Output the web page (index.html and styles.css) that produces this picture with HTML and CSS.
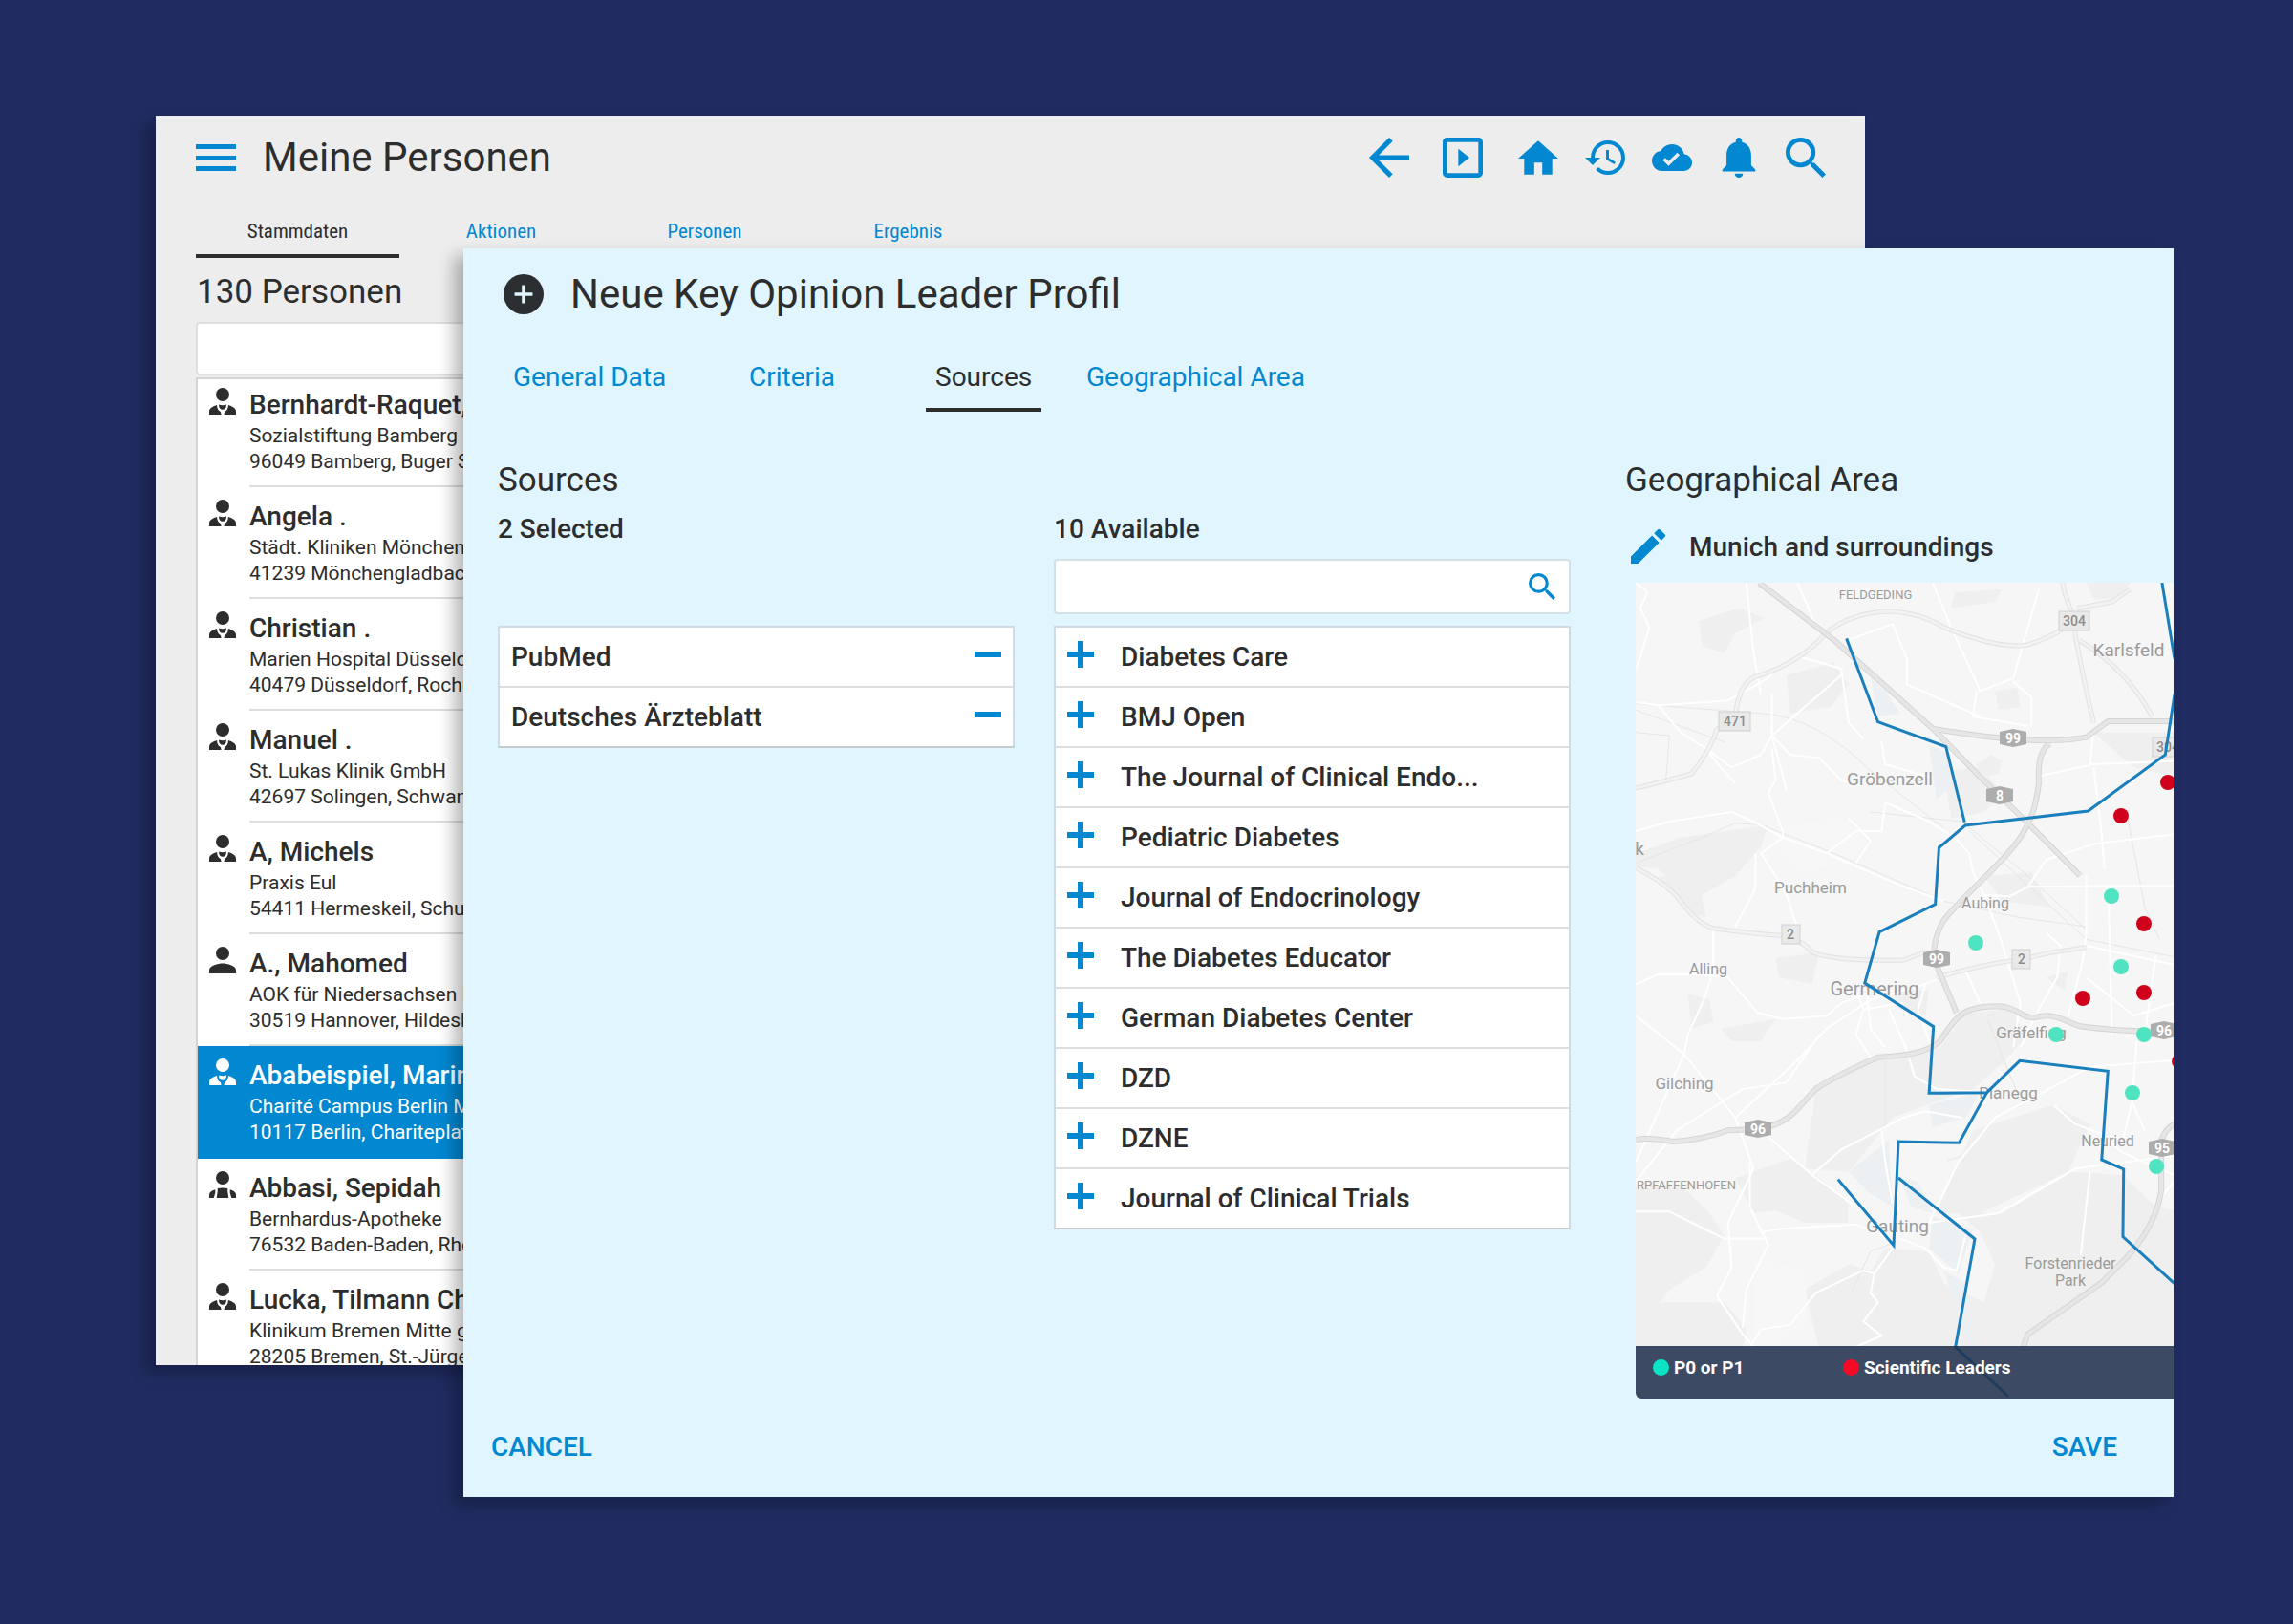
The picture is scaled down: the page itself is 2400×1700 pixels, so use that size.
FILE: index.html
```html
<!DOCTYPE html>
<html lang="de">
<head>
<meta charset="utf-8">
<meta name="viewport" content="width=device-width, initial-scale=1">
<title>Neue Key Opinion Leader Profil</title>
<link rel="stylesheet" href="styles.css">
</head>
<body>
<svg class="defs" width="0" height="0" aria-hidden="true">
  <symbol id="i-doctor" viewBox="0 0 16 16"><circle cx="8" cy="4" r="4"/><path d="M4.600 10.300C2.400 10.900 0 12.100 0 14v2h7.200l-.4-1.700C5.400 13.700 4.700 12.300 4.600 10.300zM11.400 10.300C13.600 10.900 16 12.100 16 14v2H8.800l.4-1.700C10.600 13.700 11.300 12.300 11.400 10.300zM5.700 10Q8 10.800 10.300 10Q10.200 13 8 13T5.700 10z"/></symbol>
  <symbol id="i-person" viewBox="0 0 16 16"><circle cx="8" cy="4" r="4"/><path d="M8 10c-2.670 0-8 1.340-8 4v2h16v-2c0-2.660-5.330-4-8-4z"/></symbol>
  <symbol id="i-pharmacist" viewBox="0 0 16 16"><circle cx="8" cy="4" r="4"/><path d="M5 10.300Q8 9.700 11 10.300V12L11.600 16H4.400L5 12zM3.600 11Q0 12.200 0 14v2h2.700l.9-3zM12.400 11Q16 12.200 16 14v2h-2.700l-.9-3z"/></symbol>
  <symbol id="i-plus" viewBox="0 0 14 14"><path d="M8.500 0h-3v5.500H0v3h5.500V14h3V8.500H14v-3H8.500z"/></symbol>
  <symbol id="i-minus" viewBox="0 0 14 14"><path d="M0 5.500h14v3H0z"/></symbol>
  <symbol id="i-search" viewBox="3 3 17.490 17.490"><path d="M15.500 14h-.79l-.28-.27A6.471 6.471 0 0 0 16 9.500 6.500 6.500 0 1 0 9.500 16c1.610 0 3.090-.59 4.230-1.570l.27.28v.79l5 4.990L20.490 19l-4.990-5zm-6 0C7.010 14 5 11.990 5 9.500S7.010 5 9.500 5 14 7.010 14 9.500 11.990 14 9.500 14z"/></symbol>
</svg>
<div class="desktop">
  <section class="window persons" aria-label="Meine Personen">
    <header class="persons-head">
      <button class="icon-btn" aria-label="Menü"><svg width="42" height="28" viewBox="0 0 42 28"><path d="M0 0h42v5H0zM0 12h42v5H0zM0 23h42v5H0z"/></svg></button>
      <h1 class="title">Meine Personen</h1>
      <nav class="toolbar" aria-label="Werkzeuge">
        <button class="icon-btn back" aria-label="Zurück"><svg width="42" height="42" viewBox="4 4 16 16"><path d="M20 11H7.830l5.590-5.590L12 4l-8 8 8 8 1.410-1.410L7.830 13H20v-2z"/></svg></button>
        <button class="icon-btn present" aria-label="Präsentation"><svg width="42" height="42" viewBox="3 3 18 18"><path d="M10 8v8l5-4-5-4zm9-5H5c-1.100 0-2 .9-2 2v14c0 1.100.9 2 2 2h14c1.100 0 2-.9 2-2V5c0-1.100-.9-2-2-2zm0 16H5V5h14v14z"/></svg></button>
        <button class="icon-btn" aria-label="Start"><svg width="42" height="36" viewBox="2 3 20 17"><path d="M10 20v-6h4v6h5v-8h3L12 3 2 12h3v8z"/></svg></button>
        <button class="icon-btn" aria-label="Verlauf"><svg width="42" height="36" viewBox="1 3 21 18"><path d="M13 3a9 9 0 0 0-9 9H1l3.890 3.890.07.14L9 12H6c0-3.870 3.130-7 7-7s7 3.130 7 7-3.130 7-7 7c-1.930 0-3.680-.79-4.940-2.060l-1.420 1.420A8.954 8.954 0 0 0 13 21a9 9 0 0 0 0-18zm-1 5v5l4.280 2.540.72-1.210-3.500-2.080V8H12z"/></svg></button>
        <button class="icon-btn" aria-label="Synchronisiert"><svg width="42" height="28" viewBox="0 4 24 16"><path d="M19.350 10.040C18.670 6.590 15.640 4 12 4 9.110 4 6.600 5.640 5.350 8.040 2.340 8.360 0 10.910 0 14c0 3.310 2.690 6 6 6h13c2.760 0 5-2.240 5-5 0-2.640-2.050-4.780-4.650-4.960zM10 17l-3.500-3.500 1.410-1.410L10 14.170 15.180 9l1.410 1.410L10 17z"/></svg></button>
        <button class="icon-btn" aria-label="Mitteilungen"><svg width="42" height="42" viewBox="2.250 2.500 19.500 19.500"><path d="M12 22c1.100 0 2-.9 2-2h-4c0 1.100.89 2 2 2zm6-6v-5c0-3.070-1.640-5.640-4.500-6.320V4c0-.83-.67-1.500-1.500-1.500s-1.500.67-1.500 1.500v.68C7.630 5.360 6 7.920 6 11v5l-2 2v1h16v-1l-2-2z"/></svg></button>
        <button class="icon-btn" aria-label="Suchen"><svg width="42" height="42"><use href="#i-search"/></svg></button>
      </nav>
    </header>
    <nav class="persons-tabs" aria-label="Bereiche">
      <a class="ptab current" href="#stammdaten">Stammdaten</a>
      <a class="ptab" href="#aktionen">Aktionen</a>
      <a class="ptab" href="#personen">Personen</a>
      <a class="ptab" href="#ergebnis">Ergebnis</a>
    </nav>
    <h2 class="heading count">130 Personen</h2>
    <input class="persons-search" type="search" aria-label="Personen suchen">
    <ul class="persons-list">
      <li class="person"><svg class="avatar"><use href="#i-doctor"/></svg><div class="info"><h3>Bernhardt-Raquet, </h3><p>Sozialstiftung Bamberg</p><p>96049 Bamberg, Buger S</p></div></li>
      <li class="person"><svg class="avatar"><use href="#i-doctor"/></svg><div class="info"><h3>Angela .</h3><p>Städt. Kliniken Mönchen</p><p>41239 Mönchengladbac</p></div></li>
      <li class="person"><svg class="avatar"><use href="#i-doctor"/></svg><div class="info"><h3>Christian .</h3><p>Marien Hospital Düsseld</p><p>40479 Düsseldorf, Rochu</p></div></li>
      <li class="person"><svg class="avatar"><use href="#i-doctor"/></svg><div class="info"><h3>Manuel .</h3><p>St. Lukas Klinik GmbH</p><p>42697 Solingen, Schwan</p></div></li>
      <li class="person"><svg class="avatar"><use href="#i-doctor"/></svg><div class="info"><h3>A, Michels</h3><p>Praxis Eul</p><p>54411 Hermeskeil, Schu</p></div></li>
      <li class="person"><svg class="avatar"><use href="#i-person"/></svg><div class="info"><h3>A., Mahomed</h3><p>AOK für Niedersachsen H</p><p>30519 Hannover, Hildesh</p></div></li>
      <li class="person selected"><svg class="avatar"><use href="#i-doctor"/></svg><div class="info"><h3>Ababeispiel, Marin</h3><p>Charité Campus Berlin M</p><p>10117 Berlin, Chariteplat</p></div></li>
      <li class="person"><svg class="avatar"><use href="#i-pharmacist"/></svg><div class="info"><h3>Abbasi, Sepidah</h3><p>Bernhardus-Apotheke</p><p>76532 Baden-Baden, Rhe</p></div></li>
      <li class="person"><svg class="avatar"><use href="#i-doctor"/></svg><div class="info"><h3>Lucka, Tilmann Ch</h3><p>Klinikum Bremen Mitte g</p><p>28205 Bremen, St.-Jürge</p></div></li>
    </ul>
  </section>

  <main class="window profile">
    <header class="profile-head">
      <svg width="42" height="42" viewBox="2 2 20 20" aria-hidden="true"><circle cx="12" cy="12" r="10" fill="#2b2f31"/><path d="M12 7.500v9M7.500 12h9" stroke="#e1f5fe" stroke-width="1.700"/></svg>
      <h1 class="title">Neue Key Opinion Leader Profil</h1>
    </header>
    <nav class="profile-tabs" aria-label="Profil">
      <a class="tab" href="#general">General Data</a>
      <a class="tab" href="#criteria">Criteria</a>
      <a class="tab current" href="#sources">Sources</a>
      <a class="tab" href="#area">Geographical Area</a>
    </nav>
    <div class="columns">
      <section class="col">
        <h2 class="heading">Sources</h2>
        <h3 class="sub">2 Selected</h3>
        <ul class="sources chosen">
          <li><span>PubMed</span><button class="icon-btn" aria-label="Remove PubMed"><svg class="sign"><use href="#i-minus"/></svg></button></li>
          <li><span>Deutsches Ärzteblatt</span><button class="icon-btn" aria-label="Remove Deutsches Ärzteblatt"><svg class="sign"><use href="#i-minus"/></svg></button></li>
        </ul>
      </section>
      <section class="col available-col">
        <h3 class="sub">10 Available</h3>
        <label class="search"><input type="search" aria-label="Search sources"><svg class="sign"><use href="#i-search"/></svg></label>
        <ul class="sources available">
          <li><button class="icon-btn" aria-label="Add Diabetes Care"><svg class="sign"><use href="#i-plus"/></svg></button><span>Diabetes Care</span></li>
          <li><button class="icon-btn" aria-label="Add BMJ Open"><svg class="sign"><use href="#i-plus"/></svg></button><span>BMJ Open</span></li>
          <li><button class="icon-btn" aria-label="Add The Journal of Clinical Endo..."><svg class="sign"><use href="#i-plus"/></svg></button><span>The Journal of Clinical Endo...</span></li>
          <li><button class="icon-btn" aria-label="Add Pediatric Diabetes"><svg class="sign"><use href="#i-plus"/></svg></button><span>Pediatric Diabetes</span></li>
          <li><button class="icon-btn" aria-label="Add Journal of Endocrinology"><svg class="sign"><use href="#i-plus"/></svg></button><span>Journal of Endocrinology</span></li>
          <li><button class="icon-btn" aria-label="Add The Diabetes Educator"><svg class="sign"><use href="#i-plus"/></svg></button><span>The Diabetes Educator</span></li>
          <li><button class="icon-btn" aria-label="Add German Diabetes Center"><svg class="sign"><use href="#i-plus"/></svg></button><span>German Diabetes Center</span></li>
          <li><button class="icon-btn" aria-label="Add DZD"><svg class="sign"><use href="#i-plus"/></svg></button><span>DZD</span></li>
          <li><button class="icon-btn" aria-label="Add DZNE"><svg class="sign"><use href="#i-plus"/></svg></button><span>DZNE</span></li>
          <li><button class="icon-btn" aria-label="Add Journal of Clinical Trials"><svg class="sign"><use href="#i-plus"/></svg></button><span>Journal of Clinical Trials</span></li>
        </ul>
      </section>
      <section class="col area-col">
        <h2 class="heading">Geographical Area</h2>
        <div class="area-name">
          <button class="icon-btn" aria-label="Edit area"><svg width="36" height="36" viewBox="3 3 18 18"><path d="M3 17.250V21h3.750L17.810 9.940l-3.750-3.750L3 17.250zM20.710 7.040a1 1 0 0 0 0-1.410l-2.340-2.340a1 1 0 0 0-1.410 0l-1.830 1.830 3.750 3.750 1.830-1.830z"/></svg></button>
          <span>Munich and surroundings</span>
        </div>
        <div class="map">
          <svg class="map-art" viewBox="0 0 563 854" role="img" aria-label="Map of Munich and surroundings">
            <rect width="563" height="854" fill="#f6f6f6"/>
            <g class="terrain" transform="translate(-22 240) scale(.3827 .3333)">
              <path class="wood" d="M58 130L180 80 300 60 420 40 400 110 330 200 240 260 180 240 120 180 58 170zM120 200L230 215 250 330 200 320zM230 -600L340 -640 410 -610 330 -560 300 -500 240 -520zM470 -430L600 -470 640 -400 590 -330 480 -310zM200 570L260 590 270 660 210 680zM290 680L440 650 400 720 320 720zM440 460L560 440 540 540 450 520zM330 1150L480 1090 550 1140 640 1230 640 1290 520 1290 440 1250 380 1260zM58 1180L180 1170 260 1260 300 1330 250 1430 150 1500 58 1640z"/>
              <path class="wood" d="M550 870L720 780 890 740 960 630 1080 620 1130 700 1060 790 980 870 900 900 760 960 640 1130 520 1120zM980 1000L1200 920 1300 980 1240 1130 1000 1260 880 1260zM940 1260L1060 1260 1250 1130 1390 1140 1480 1240 1530 1250V1690H560L520 1500 640 1420 700 1440 740 1370 860 1380 900 1480 1010 1540 1040 1420 1000 1320zM120 1540L300 1540 360 1620 350 1690H58V1600z"/>
              <path class="wood" d="M1310 -250L1530 -250V-110L1420 -140zM900 -130L1000 -140 1060 -60 1010 0 920 20zM930 -690L1060 -700 1040 -660 920 -640zM1290 -720H1410L1380 -670 1310 -670zM1010 200L1140 190 1190 300 1060 280zM1040 -380L1100 -390 1110 -330 1050 -320zM760 560L860 560 850 640 780 620zM1180 520L1240 500 1230 560zM990 -150l40 -30 30 20 -10 40 -40 10z"/>
              <path class="open" d="M420 40L640 20 700 90 640 160 500 190 440 120zM640 640L800 620 830 720 720 760 640 740zM380 1400L520 1440 530 1600 440 1690 380 1690z"/>
              <path class="field" d="M700 -420L740 -380 780 -310 720 -300zM860 -210L920 -180 920 -80 880 -40zM640 1130L750 1030 760 1240 700 1200zM860 920L1000 880 960 960 870 990zM870 1270L980 1310 940 1450 860 1370zM780 1150L830 1160 870 1260 810 1240zM900 1440L960 1480 990 1690 960 1640z"/>
              <path class="thin" d="M58 -340L400 -310Q550 -300 700 -130L900 50M58 -320L300 -220M58 160L240 80 330 35 400 40 600 130 900 280 1100 330 1290 360M700 0L950 30 1130 200 1290 370M970 60L1290 400 1530 455M1400 0L1450 300 1490 400M740 780V980L730 1000M650 1500L700 1380 770 1350M1020 650L1100 880M910 1095L950 1080M58 -250L150 -240 140 -100"/>
              <path class="white" d="M58 -345L120 -335 310 -350 390 -400 430 -430M120 -335L180 -250 250 -200 320 -140 400 -180 430 -240 430 -370M250 -200Q280 -150 330 -90M360 -720L380 -500 400 -370M430 -240L520 -330 620 -430M430 -240L480 -180 560 -170 620 -100 680 -80M500 -490L620 -450 640 -280 680 -230M640 -540L760 -590 800 -480 800 -400M800 -400L1000 -300M870 -720L920 -580 1000 -380 1090 -420 1160 -700M1090 -410L1140 -360 1140 -270M990 -380L980 -300 1130 -270M58 -720L90 -690 70 -640 95 -580 60 -450"/>
              <path class="white" d="M430 -200L440 -100 420 -60 460 60 460 80M58 60L150 30 320 0 380 30 460 80 580 130 780 230 900 280M460 80L400 130 440 200 470 260 510 400M385 130V240L330 360M270 370V500L240 600 200 700 190 760M58 540L120 510 230 510 310 520 390 630 460 650 580 640M58 640L190 760 260 860 330 960M58 1100L190 760M330 960L500 780 580 680 700 590 850 540 920 510M560 700L470 850 350 870 170 1000 58 1160M330 960L380 1120 310 1290 320 1430 280 1520 350 1640 380 1680M420 1020L540 1140 660 1240"/>
              <path class="white" d="M540 1140L620 1060 790 960 850 940 950 960M580 640L620 600 690 570 760 560M660 560L680 620 790 600M690 570L700 680 740 740M750 620L800 750 820 830 880 870 1000 880M680 620L660 700 700 770M58 1255H150L300 1340H415M415 1340L400 1320 450 1310 660 1295 760 1340M370 1100L370 1240 420 1360 360 1500 350 1620M370 1680L400 1625 480 1610 550 1510 680 1440 710 1450 760 1370M710 1450L700 1510 720 1540 680 1600 730 1645 660 1680"/>
              <path class="white" d="M860 1290L940 1100 1040 960 1140 900 1220 850 1300 800 1530 780M860 1290L1050 1260 1260 1120 1530 1080M780 1340L850 1370 900 1430 935 1440 960 1330M1200 920L1260 980 1330 1010 1390 1070 1530 1140M1300 1130L1275 1390M730 1000L740 1100 760 1230M1390 1030L1415 910 1450 1000M1415 910L1430 690M1480 1230L1530 1160"/>
              <path class="white" d="M930 80L970 130 980 190 1010 260 1050 380 1110 600 1090 740M1010 260L1080 265 1130 235 1530 230M1130 235L1180 150 1310 100 1530 70M1290 200V380L1280 470 1240 640M1290 520L1420 640 1530 600M1290 420L1530 480M1310 -140L1330 50 1340 180M1180 380L1220 420 1210 520 1150 640 1110 740M960 500L1000 600M1350 230L1360 700M1480 450L1450 700M740 -30L860 30 930 80M1310 -260L1300 -150 1530 -160M1150 -110L1310 -150M580 130L660 60 730 60 740 -30M660 160L700 90 640 20M850 540L830 620 860 720M430 -240L470 -70M500 -720L560 -560M730 -220L740 -150 860 -110"/>
              <path class="road-edge" d="M58 175Q150 230 180 280 230 355 270 365 400 385 460 388 510 400 540 440 600 470 790 465L850 440M880 520Q1000 480 1110 463L1200 440 1290 425M58 -75Q150 -100 210 -120 260 -190 280 -260L330 -300Q340 -420 400 -430 500 -470 560 -540 620 -620 740 -630 830 -630 900 -580 1050 -510 1130 -525 1200 -550 1260 -600 1230 -680 1225 -720M1265 -640L1360 -660 1410 -700M1255 -590Q1270 -480 1310 -280M1270 -540Q1400 -450 1470 -300"/>
              <path class="road" d="M58 175Q150 230 180 280 230 355 270 365 400 385 460 388 510 400 540 440 600 470 790 465L850 440M880 520Q1000 480 1110 463L1200 440 1290 425M58 -75Q150 -100 210 -120 260 -190 280 -260L330 -300Q340 -420 400 -430 500 -470 560 -540 620 -620 740 -630 830 -630 900 -580 1050 -510 1130 -525 1200 -550 1260 -600 1230 -680 1225 -720M1265 -640L1360 -660 1410 -700M1255 -590Q1270 -480 1310 -280M1270 -540Q1400 -450 1470 -300"/>
              <path class="motorway-edge" d="M395 -720L600 -540 870 -262 1000 -110 1130 35 1273 200M870 -262Q1160 -205 1290 -235L1350 -285H1530M1190 -215Q1155 -190 1160 -90 1150 0 1130 35C1100 130 960 250 900 340 870 400 870 450 880 480L935 630M58 1030Q90 1020 160 1035 240 1030 310 1000L400 995Q460 980 490 945L550 870Q600 830 720 770 850 765 890 720C940 630 960 610 1050 610 1110 615 1110 650 1150 645 1200 630 1220 650 1270 672Q1380 690 1530 690M1530 980Q1490 1010 1495 1060V1190Q1480 1300 1400 1400L1330 1480 1130 1640 1115 1690"/>
              <path class="motorway" d="M395 -720L600 -540 870 -262 1000 -110 1130 35 1273 200M870 -262Q1160 -205 1290 -235L1350 -285H1530M1190 -215Q1155 -190 1160 -90 1150 0 1130 35C1100 130 960 250 900 340 870 400 870 450 880 480L935 630M58 1030Q90 1020 160 1035 240 1030 310 1000L400 995Q460 980 490 945L550 870Q600 830 720 770 850 765 890 720C940 630 960 610 1050 610 1110 615 1110 650 1150 645 1200 630 1220 650 1270 672Q1380 690 1530 690M1530 980Q1490 1010 1495 1060V1190Q1480 1300 1400 1400L1330 1480 1130 1640 1115 1690"/>
            </g>
            <g class="shield">
              <rect x="443" y="30" width="32" height="20"/><rect x="87" y="135" width="33" height="20"/><rect x="541" y="162" width="32" height="20"/><rect x="153" y="358" width="19" height="20"/><rect x="394" y="384" width="19" height="20"/>
            </g>
            <g class="shield-text">
              <text x="459" y="45">304</text><text x="104" y="150">471</text><text x="557" y="177">304</text><text x="162" y="373">2</text><text x="404" y="399">2</text>
            </g>
            <g class="badge">
              <path d="M381 156l14-3 14 3v13l-14 3-14-3z"/><path d="M367 216l14-3 14 3v13l-14 3-14-3z"/><path d="M301 387l14-3 14 3v13l-14 3-14-3z"/><path d="M539 462l14-3 14 3v13l-14 3-14-3z"/><path d="M114 565l14-3 14 3v13l-14 3-14-3z"/><path d="M537 585l14-3 14 3v13l-14 3-14-3z"/>
            </g>
            <g class="badge-text">
              <text x="395" y="168">99</text><text x="381" y="228">8</text><text x="315" y="399">99</text><text x="553" y="474">96</text><text x="128" y="577">96</text><text x="551" y="597">95</text>
            </g>
            <g class="places">
              <text class="xs" x="251" y="17">FELDGEDING</text>
              <text class="lg" x="516" y="77">Karlsfeld</text>
              <text class="lg" x="266" y="212">Gröbenzell</text>
              <text class="lg" x="4" y="285">k</text>
              <text class="md" x="183" y="325">Puchheim</text>
              <text class="sm" x="366" y="341">Aubing</text>
              <text class="sm" x="76" y="410">Alling</text>
              <text class="xl" x="250" y="432">Germering</text>
              <text class="md" x="414" y="477">Gräfelfing</text>
              <text class="md" x="51" y="530">Gilching</text>
              <text class="md" x="390" y="540">Planegg</text>
              <text class="sm" x="494" y="590">Neuried</text>
              <text class="xs" x="53" y="635">RPFAFFENHOFEN</text>
              <text class="lg" x="274" y="680">Gauting</text>
              <text class="sm" x="455" y="718">Forstenrieder</text>
              <text class="sm" x="455" y="736">Park</text>
            </g>
            <g class="boundary" transform="translate(-22 240) scale(.3827 .3333)">
              <path d="M634 -545L720 -283 906 -205 957 32"/>
              <path d="M1497 -720L1530 -490 1542 -430 1530 -360 1506 -180 1295 -3 959 42 887 112 877 290 724 377 684 537 872 674 860 883 1018 881 1108 781 1349 814 1332 1092 1392 1122 1390 1334 1540 1490"/>
              <path d="M1018 881L942 1039 776 1035 763 1361 611 1154"/>
              <path d="M776 1149L985 1341 932 1680 1076 1835"/>
            </g>
            <g fill="#d0021b"><circle cx="508" cy="244" r="8"/><circle cx="557" cy="209" r="8"/><circle cx="532" cy="357" r="8"/><circle cx="468" cy="435" r="8"/><circle cx="532" cy="429" r="8"/><circle cx="569" cy="501" r="8"/></g>
            <g fill="#50e3c2"><circle cx="498" cy="328" r="8"/><circle cx="356" cy="377" r="8"/><circle cx="508" cy="402" r="8"/><circle cx="440" cy="473" r="8"/><circle cx="532" cy="473" r="8"/><circle cx="520" cy="534" r="8"/><circle cx="545" cy="611" r="8"/></g>
          </svg>
          <div class="legend">
            <span class="key"><i class="dot teal"></i>P0 or P1</span>
            <span class="key"><i class="dot red"></i>Scientific Leaders</span>
          </div>
        </div>
      </section>
    </div>
    <footer class="actions">
      <button class="text-btn" type="button">CANCEL</button>
      <button class="text-btn" type="button">SAVE</button>
    </footer>
  </main>
</div>
</body>
</html>
```
FILE: styles.css
```css
:root {
  --navy: #202c61;
  --blue: #0288d1;
  --ink: #2d2d2d;
  --line: #dedede;
  --panel: #e1f5fe;
}

* { box-sizing: border-box; }

body {
  margin: 0;
  background: var(--navy);
  color: var(--ink);
  font-family: Roboto, "Liberation Sans", sans-serif;
}

h1, h2, h3, p, ul { margin: 0; padding: 0; }
ul { list-style: none; }
svg { display: block; }
a { color: var(--blue); text-decoration: none; }
button, input { font: inherit; }
.defs { position: absolute; }

/* Two overlapping windows share the middle tracks of the grid */
.desktop {
  display: grid;
  grid-template-columns: 163px 322px minmax(0, 1fr) 323px 125px;
  grid-template-rows: 121px 139px 1fr 138px 133px;
  min-height: 100vh;
}

.window {
  overflow: hidden;
  box-shadow: -10px 8px 16px rgba(0, 0, 0, .28);
}

.title {
  font-size: 42px;
  font-weight: 400;
  line-height: 50px;
}

.heading {
  font-size: 35px;
  font-weight: 400;
  line-height: 42px;
}

.icon-btn {
  display: flex;
  align-items: center;
  justify-content: center;
  padding: 0;
  border: 0;
  background: none;
  color: var(--blue);
  fill: currentColor;
}

/* Persons window */
.persons {
  grid-column: 2 / 4;
  grid-row: 2 / 4;
  display: flex;
  flex-direction: column;
  padding: 0 41px 0 42px;
  background: #ededed;
  contain: size;
}

.persons-head {
  display: flex;
  align-items: center;
  gap: 28px;
  height: 88px;
  flex: none;
}

.toolbar {
  display: flex;
  align-items: center;
  gap: 28px;
  margin-left: auto;
}

.toolbar .icon-btn { width: 42px; }
.toolbar .back { margin-right: 7px; }
.toolbar .present { margin-right: 9px; }

.persons-tabs {
  display: flex;
  margin-top: 21px;
}

.ptab {
  width: 213px;
  padding-bottom: 12px;
  border-bottom: 4px solid transparent;
  font-family: "Roboto Condensed", Roboto, sans-serif;
  font-size: 21px;
  line-height: 24px;
  text-align: center;
}

.ptab.current, .tab.current {
  color: var(--ink);
  border-color: var(--ink);
}

.count {
  margin-top: 15px;
  padding-left: 1px;
}

.persons-search {
  flex: none;
  height: 56px;
  margin-top: 10px;
  border: 2px solid var(--line);
  border-radius: 4px;
  background: #fff;
}

.persons-list {
  flex: 1;
  min-height: 0;
  margin-top: 2px;
  overflow: hidden;
  border: 2px solid #d4d4d4;
  border-bottom: 0;
  background: #fff;
}

.person {
  display: flex;
  gap: 14px;
  padding-left: 12px;
  fill: #2d2d2d;
}

.avatar {
  flex: none;
  width: 28px;
  height: 28px;
  margin-top: 13px;
}

.info {
  flex: 1;
  padding: 15px 0 11px;
  border-bottom: 2px solid var(--line);
  white-space: nowrap;
}

.person:first-child .info { padding-top: 11px; }
.person:first-child .avatar { margin-top: 9px; }

.info h3 {
  margin-bottom: 3px;
  font-size: 28px;
  font-weight: 500;
  line-height: 32px;
}

.info p {
  font-size: 21px;
  line-height: 27px;
}

.person.selected {
  background: var(--blue);
  color: #fff;
  fill: #fff;
}

.selected .info {
  padding-bottom: 12px;
  border-color: var(--blue);
}

/* Profile window */
.profile {
  grid-column: 3 / 5;
  grid-row: 3 / 5;
  display: flex;
  flex-direction: column;
  padding-top: 27px;
  background: var(--panel);
}

.profile-head {
  display: flex;
  align-items: center;
  gap: 28px;
  height: 42px;
  padding-left: 42px;
}

.profile-tabs {
  display: grid;
  grid-template-columns: 247px 195px 158px auto;
  justify-items: start;
  margin-top: 50px;
  padding-left: 42px;
}

.tab {
  padding: 0 10px 16px;
  border-bottom: 4px solid transparent;
  font-size: 28px;
  line-height: 32px;
}

.columns {
  display: grid;
  grid-template-columns: 541fr 541fr 590fr;
  gap: 41px;
  margin-top: 51px;
  padding-left: 36px;
}

.sub {
  margin-top: 13px;
  font-size: 28px;
  font-weight: 500;
  line-height: 34px;
}

.available-col { padding-top: 42px; }
.area-col { padding-left: 16px; }

.search {
  display: flex;
  align-items: center;
  height: 58px;
  margin-top: 14px;
  padding-right: 14px;
  border: 2px solid #d3e0e8;
  border-radius: 4px;
  background: #fff;
  fill: var(--blue);
}

.search input {
  flex: 1;
  min-width: 0;
  height: 100%;
  border: 0;
  background: none;
}

.sign {
  width: 28px;
  height: 28px;
}

.sources {
  border: 2px solid #d0dae0;
  border-bottom-color: #c4ccd0;
  background: #fff;
  font-size: 28px;
  font-weight: 500;
  line-height: 34px;
}

.sources li {
  display: flex;
  align-items: center;
  height: 63px;
  border-bottom: 2px solid var(--line);
}

.sources li:last-child { height: 61px; border-bottom: 0; }
.sources .icon-btn { padding-bottom: 6px; }

.chosen { margin-top: 84px; }
.chosen li { justify-content: space-between; padding: 0 12px; }
.available { margin-top: 12px; }
.available li { gap: 28px; padding-left: 12px; }

.area-name {
  display: flex;
  align-items: center;
  gap: 25px;
  height: 36px;
  margin-top: 30px;
  padding-left: 6px;
  font-size: 28px;
  font-weight: 500;
}

.map {
  position: relative;
  margin: 20px 0 0 11px;
  overflow: hidden;
  border-radius: 0 0 0 6px;
}

.map-art { width: 100%; height: auto; }
.map-art path { vector-effect: non-scaling-stroke; }

.terrain path, .boundary path { fill: none; stroke-linejoin: round; }
.terrain .wood { fill: #efefef; }
.terrain .open { fill: #f7f7f7; }
.terrain .field { fill: #ecf0f3; }
.thin { stroke: #e6e6e6; stroke-width: 1px; }
.white { stroke: #fff; stroke-width: 2px; }
.road-edge { stroke: #e2e2e2; stroke-width: 5px; }
.road { stroke: #f2f2f2; stroke-width: 3px; }
.motorway-edge { stroke: #d5d5d5; stroke-width: 6px; }
.motorway { stroke: #e6e6e6; stroke-width: 4px; }
.boundary path { stroke: #1a7fbd; stroke-width: 3px; stroke-linejoin: miter; }

.shield { fill: #e9e9e9; stroke: #cfcfcf; }
.badge { fill: #adadad; }
.places, .shield-text, .badge-text { text-anchor: middle; }
.places { fill: #9b9b9b; }
.shield-text { fill: #8c8c8c; font-size: 14px; font-weight: 500; }
.badge-text { fill: #fff; font-size: 14px; font-weight: 700; }
.xs { font-size: 13px; }
.sm { font-size: 16px; }
.md { font-size: 17px; }
.lg { font-size: 19px; }
.xl { font-size: 20px; }

.legend {
  position: absolute;
  inset: auto 0 0;
  display: grid;
  grid-template-columns: 199px auto;
  align-items: center;
  height: 55px;
  padding: 0 0 10px 18px;
  background: rgba(34, 51, 79, .88);
  color: #fff;
  font-size: 19px;
  font-weight: 700;
}

.key {
  display: flex;
  align-items: center;
  gap: 5px;
}

.dot {
  width: 17px;
  height: 17px;
  border-radius: 50%;
}

.teal { background: #0be3c5; }
.red { background: #f50a25; }

.actions {
  display: flex;
  justify-content: space-between;
  margin-top: auto;
  padding: 34px 59px 35px 29px;
}

.text-btn {
  padding: 0;
  border: 0;
  background: none;
  color: var(--blue);
  font-size: 28px;
  font-weight: 500;
  line-height: 34px;
}
```
